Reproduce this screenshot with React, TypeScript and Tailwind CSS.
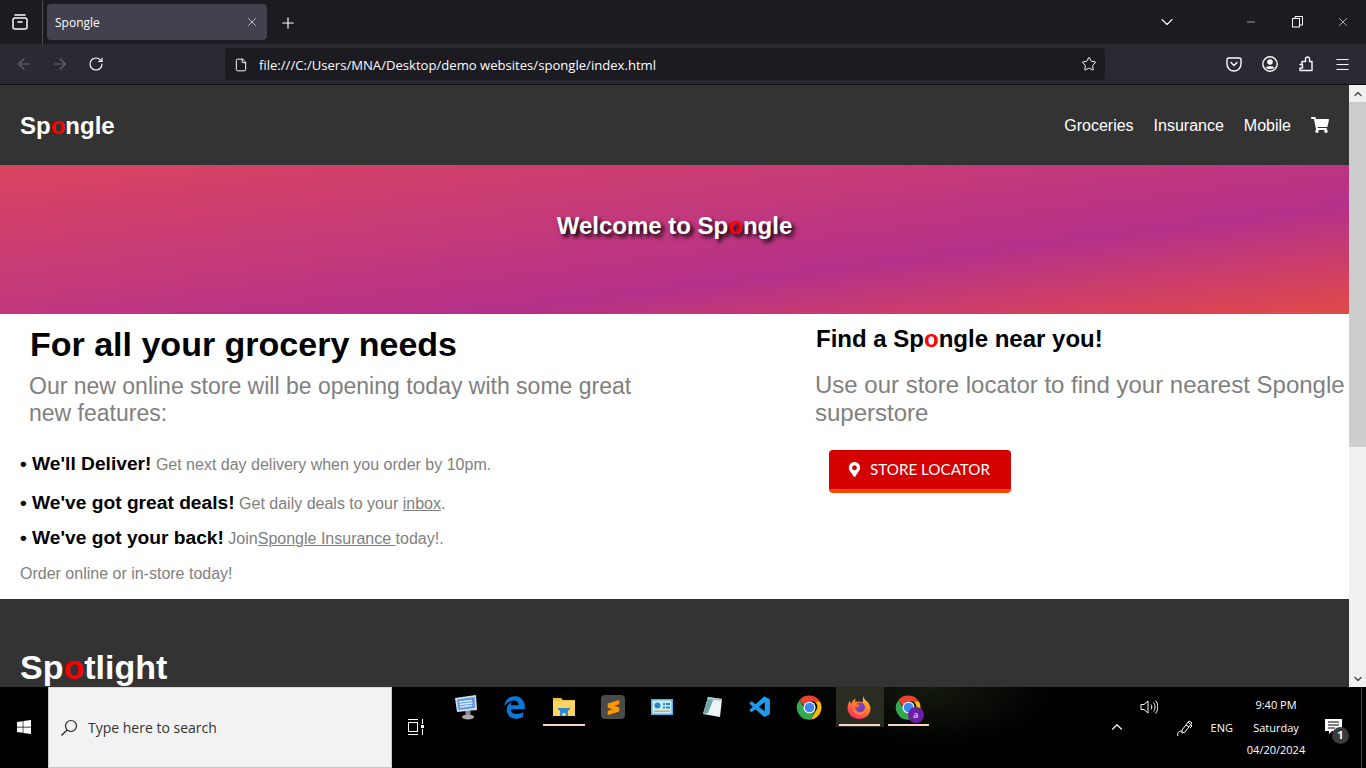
import { ArrowLeft, ArrowRight, ChevronDown, ChevronUp, File, Menu, Minus, Plus, RotateCw, Star, X } from "lucide-react";
import { FaMapMarkerAlt, FaShoppingCart, FaWindows } from "react-icons/fa";
import { FaEdgeLegacy } from "react-icons/fa";
import { VscVscode } from "react-icons/vsc";
import { SiSublimetext } from "react-icons/si";

const arial = "font-['Liberation_Sans',Arial,sans-serif]";
const ui = "font-['Open_Sans','Noto_Sans',sans-serif]";

function Logo({ text, o = "text-[#ff0000]" }: { text: [string, string]; o?: string }) {
  return (
    <>
      {text[0]}
      <span className={o}>o</span>
      {text[1]}
    </>
  );
}

function Chrome({ size = 29 }: { size?: number }) {
  return (
    <svg width={size} height={size} viewBox="0 0 48 48">
      <path d="M24 4a20 20 0 0 1 17.3 10H24a10 10 0 0 0-9.5 7L7.6 11.4A20 20 0 0 1 24 4z" fill="#ea4335" />
      <path d="M41.3 14A20 20 0 0 1 26 43.9l8.7-14.9A10 10 0 0 0 32 14z" fill="#fbbc04" />
      <path d="M26 43.9A20 20 0 0 1 7.6 11.4l8.7 15A10 10 0 0 0 25 34l8.6-4.9z" fill="#34a853" />
      <circle cx="24" cy="24" r="10" fill="#fff" />
      <circle cx="24" cy="24" r="8" fill="#4285f4" />
    </svg>
  );
}

function Firefox() {
  return (
    <svg width="24" height="24" viewBox="0 0 48 48">
      <defs>
        <linearGradient id="ffa" x1="0.8" y1="0" x2="0.2" y2="1">
          <stop offset="0" stopColor="#ffd83a" />
          <stop offset="0.45" stopColor="#ff7a2a" />
          <stop offset="1" stopColor="#f5286a" />
        </linearGradient>
      </defs>
      <path d="M32 1c1 6 4 8 8 12 5 5 7 10 7 14 0 12-10 21-23 21S1 38 1 25c0-5 2-10 5-14 0 3 1 5 3 6 1-5 5-9 9-10-2 3-2 6-1 7 5-1 11 0 14 3 1-5 1-11 1-16z" fill="url(#ffa)" />
      <circle cx="25" cy="26" r="13" fill="#ff8a30" />
      <circle cx="26" cy="25" r="10" fill="#7b3fc4" />
      <path d="M15 20c4-4 9-2 10 1s-3 4-7 4 0 8 7 9c-7 2-14-6-10-14z" fill="#ff6a2a" />
    </svg>
  );
}

function StationIcon() {
  return (
    <svg width="24" height="26" viewBox="0 0 24 26">
      <path d="M1 4 L22 1 L23 16 L3 18z" fill="#d6dde6" />
      <path d="M3 5.5 L20.5 3 L21 14 L4.5 16z" fill="#5c9ae6" />
      <path d="M5 8l13-1.5M5.5 10.5l13-1.5M6 13l12-1.5" stroke="#dbe9fb" strokeWidth="1.4" />
      <ellipse cx="14" cy="23" rx="6" ry="2.6" fill="#a9acaf" />
      <rect x="11.5" y="17" width="5" height="4" fill="#8b8f94" />
    </svg>
  );
}

function FolderIcon() {
  return (
    <svg width="22" height="20" viewBox="0 0 22 20">
      <path d="M0 1h8l2 2h12v3H0z" fill="#f2c23e" />
      <rect y="4" width="22" height="15" fill="#fcd462" />
      <path d="M7 19v-6h8v6h-2.500v-3h-3v3z" fill="#2a8bd8" />
      <rect x="5" y="11" width="12" height="2" fill="#2a8bd8" />
    </svg>
  );
}

function PanelIcon() {
  return (
    <svg width="22" height="18" viewBox="0 0 22 18">
      <rect width="22" height="16" y="1" fill="#4fb2ea" />
      <rect x="1.500" y="2.500" width="19" height="13" fill="#c9ebfa" />
      <circle cx="6.500" cy="7.500" r="3" fill="#2a86cf" />
      <path d="M12 5h2v2h-2zM15 5h4v2h-4zM12 8.500h2v2h-2zM15 8.500h4v2h-4z" fill="#2a86cf" />
      <rect x="3" y="12.500" width="16" height="1.500" fill="#e6a93a" />
    </svg>
  );
}

function NotepadIcon() {
  return (
    <svg width="24" height="24" viewBox="0 0 24 24">
      <path d="M8 2 L22 4 L20 22 L3 19z" fill="#eef3f5" />
      <path d="M8 2 L14 3 L8 18 L3 19z" fill="#6fa6ad" />
      <path d="M8 2 L22 4 L21.700 6 L7.500 4z" fill="#a8c7cc" />
    </svg>
  );
}

function TaskIcon({ children, active, underline }: { children: React.ReactNode; active?: boolean; underline?: boolean }) {
  return (
    <div className="relative flex h-10 w-[49.2px] shrink-0 items-center justify-center">
      {active && <div className="absolute inset-y-0 left-px right-0 bg-[#2a2c22]" />}
      <div className="relative flex">{children}</div>
      {underline && <div className="absolute bottom-px left-1 right-1 h-0.5 bg-[#f9d6c0]" />}
    </div>
  );
}

export default function App() {
  return (
    <div className={`flex h-screen w-full flex-col overflow-hidden bg-black ${arial}`}>
      {/* title bar */}
      <div className="flex h-11 shrink-0 bg-[#1c1b22] text-[#fbfbfe]">
        <div className="flex w-[43px] items-center justify-center border-r border-[#4a4a52]">
          <svg width="18" height="18" viewBox="0 0 18 18" fill="none" stroke="currentColor" strokeWidth="1.500" className="-ml-0.5">
            <rect x="2" y="5" width="14" height="11" rx="2" />
            <path d="M4 2h10M7 9h4" strokeLinecap="round" />
          </svg>
        </div>
        <div className="ml-1 mt-1 flex h-9 w-[220px] items-center justify-between rounded bg-[#42414d] pl-2 pr-2">
          <span className={`${ui} pt-0.5 text-xs`}>Spongle</span>
          <X size={14} strokeWidth={1.100} />
        </div>
        <div className="ml-3 flex items-center pt-0.5">
          <Plus size={18} strokeWidth={1.500} />
        </div>
        <div className="flex-1" />
        <div className="flex items-center">
          <ChevronDown size={20} strokeWidth={1.300} className="mr-[68px]" />
          <Minus size={12} strokeWidth={1.200} className="mr-[35px]" />
          <svg width="11" height="12" viewBox="0 0 11 12" fill="none" stroke="currentColor" className="mr-[33px]">
            <rect x="0.500" y="2.500" width="7" height="8.500" />
            <path d="M3 2V.5h7.500V9H8" />
          </svg>
          <X size={14} strokeWidth={1.100} className="mr-4" />
        </div>
      </div>
      {/* toolbar */}
      <div className="flex h-10 shrink-0 items-center bg-[#2b2a33] text-[#fbfbfe]">
        <ArrowLeft size={18} strokeWidth={1.500} className="ml-[15px] text-[#66656c]" />
        <ArrowRight size={18} strokeWidth={1.500} className="ml-[18px] text-[#66656c]" />
        <RotateCw size={16} strokeWidth={1.700} className="ml-[19px]" />
        <div className="ml-[121px] flex h-8 w-[880px] items-center rounded bg-[#1c1b22] pl-[9px] pr-2">
          <File size={14} strokeWidth={1.700} className="mt-px" />
          <span className={`${ui} ml-[11px] pt-[3px] text-[13.100px]`}>file:///C:/Users/MNA/Desktop/demo websites/spongle/index.html</span>
          <div className="flex-1" />
          <Star size={16} strokeWidth={1.500} />
        </div>
        <div className="flex-1" />
        <div className="flex items-center gap-5 pr-[15px]">
          <svg width="16" height="16" viewBox="0 0 16 16" fill="none" stroke="currentColor" strokeWidth="1.400">
            <path d="M2.500 2h11A1.500 1.500 0 0 1 15 3.500V8A7 7 0 0 1 1 8V3.500A1.500 1.500 0 0 1 2.500 2z" />
            <path d="M5 6.500 8 9.500l3-3" strokeLinecap="round" />
          </svg>
          <svg width="16" height="16" viewBox="0 0 16 16">
            <circle cx="8" cy="8" r="7.200" fill="none" stroke="currentColor" strokeWidth="1.400" />
            <circle cx="8" cy="6" r="2.800" fill="currentColor" />
            <path d="M3.500 11.500C5 9.800 11 9.800 12.500 11.500 11 13.500 5 13.500 3.500 11.500z" fill="currentColor" />
          </svg>
          <svg width="16" height="16" viewBox="0 0 16 16" fill="none" stroke="currentColor" strokeWidth="1.400" strokeLinejoin="round">
            <path d="M2 8.500h2V5.500h3.500V3a2 2 0 0 1 4 0v2.500h2.500v9H2v-2.500h2.500V8.500z" />
          </svg>
          <Menu size={17} strokeWidth={1.400} />
        </div>
      </div>
      <div className="h-px shrink-0 bg-[#0b0b0d]" />

      {/* page */}
      <div className="flex h-[602px] shrink-0 overflow-hidden">
        <div className="w-[1349px] shrink-0 overflow-hidden bg-white">
          <header className="flex h-20 items-center bg-[#333333] pl-5 pr-5 pt-0.5 text-white">
            <div className="text-2xl font-bold">
              <Logo text={["Sp", "ngle"]} />
            </div>
            <div className="flex-1" />
            <nav className="flex items-center gap-5 text-base">
              <span>Groceries</span>
              <span>Insurance</span>
              <span>Mobile</span>
              <FaShoppingCart size={18} className="-mt-0.5" />
            </nav>
          </header>
          <section className="flex h-[149px] items-center justify-center bg-[linear-gradient(173deg,#da4560_0%,#b5318a_66%,#e24a48_100%)]">
            <h2 className="-mt-[27px] text-2xl font-bold text-white [text-shadow:3px_3px_4px_#000]">
              Welcome to <Logo text={["Sp", "ngle"]} />
            </h2>
          </section>
          <section className="flex h-[285px] bg-white">
            <div className="w-[815px] shrink-0">
              <h1 className="ml-[30px] mt-3 text-[34px] leading-[36px] font-bold text-black">For all your grocery needs</h1>
              <p className="ml-[29px] mt-[11px] w-[620px] text-[23px] leading-[27px] text-[#808080]">
                Our new online store will be opening today with some great new features:
              </p>
              <div className="ml-5 mt-[23px] text-base text-[#808080]">
                <p className="h-[39px]">
                  <b className="text-[19.200px] text-black">• We'll Deliver!</b> Get next day delivery when you order by 10pm.
                </p>
                <p className="h-[35px]">
                  <b className="text-[19.200px] text-black">• We've got great deals!</b> Get daily deals to your <u>inbox</u>.
                </p>
                <p className="h-[38px]">
                  <b className="text-[19.200px] text-black">• We've got your back!</b> Join<u>Spongle Insurance </u>today!.
                </p>
                <p>Order online or in-store today!</p>
              </div>
            </div>
            <div className="min-w-0 flex-1">
              <h3 className="ml-px mt-[11px] text-2xl leading-[27px] font-bold text-black">
                Find a <Logo text={["Sp", "ngle"]} /> near you!
              </h3>
              <p className="mt-[19px] text-2xl leading-[28px] text-[#808080]">
                Use our store locator to find your nearest Spongle superstore
              </p>
              <button className="ml-3.5 mt-[23px] flex h-[43px] w-[182px] items-center rounded border-b-[4px] border-[#ff4500] bg-[#d40000] pl-[18px] text-white">
                <FaMapMarkerAlt size={15} />
                <span className="ml-2 font-['Lato',sans-serif] text-[15.200px]">STORE LOCATOR</span>
              </button>
            </div>
          </section>
          <section className="h-[88px] overflow-hidden bg-[#333333] pl-5 pt-[48px] text-white">
            <h2 className="text-[34px] leading-[40px] font-bold">
              <Logo text={["Sp", "tlight"]} />
            </h2>
          </section>
        </div>
        <div className="flex w-[17px] shrink-0 flex-col bg-[#f0f0f0]">
          <div className="flex h-[17px] items-center justify-center text-[#505050]">
            <ChevronUp size={12} strokeWidth={3} />
          </div>
          <div className="h-[345px] bg-[#cdcdcd]" />
          <div className="flex-1" />
          <div className="flex h-[17px] items-center justify-center text-[#505050]">
            <ChevronDown size={12} strokeWidth={3} />
          </div>
        </div>
      </div>

      {/* taskbar */}
      <div className={`flex h-[81px] shrink-0 bg-[radial-gradient(ellipse_130px_60px_at_930px_0px,#141a0e,#000)] text-white ${ui}`}>
        <div className="flex h-full w-12 items-center justify-center">
          <FaWindows size={16} className="-mt-0.5" />
        </div>
        <div className="flex h-full w-[344px] items-center border border-[#c8c8c8] border-t-[#d8d8d8] bg-[#f2f2f2] pl-[11px] text-[#333]">
          <svg width="18" height="18" viewBox="0 0 18 18" fill="none" stroke="#222" strokeWidth="1.200">
            <circle cx="11" cy="7" r="5.500" />
            <path d="M7 11 1.500 16.500" />
          </svg>
          <span className="ml-[10px] text-sm">Type here to search</span>
        </div>
        <div className="flex h-full w-[49px] items-center justify-center pr-0.5">
          <svg width="17" height="16" viewBox="0 0 17 16" fill="none" stroke="#fff" className="-mt-0.5">
            <path d="M1 .5h10M1 15.500h10M15.500 0v5M15.500 10v6" />
            <rect x="1.500" y="3.500" width="9" height="9" />
            <rect x="14" y="6" width="3" height="3" fill="#fff" stroke="none" />
          </svg>
        </div>
        <div className="flex h-10 items-start">
          <TaskIcon><StationIcon /></TaskIcon>
          <TaskIcon><FaEdgeLegacy size={23} className="text-[#0a78d6]" /></TaskIcon>
          <TaskIcon underline><FolderIcon /></TaskIcon>
          <TaskIcon>
            <div className="flex h-6 w-6 items-center justify-center rounded-sm bg-[#4a4a4a]">
              <SiSublimetext size={15} className="text-[#ff9800]" />
            </div>
          </TaskIcon>
          <TaskIcon><PanelIcon /></TaskIcon>
          <TaskIcon><NotepadIcon /></TaskIcon>
          <TaskIcon><VscVscode size={25} className="text-[#1f9cf0]" /></TaskIcon>
          <TaskIcon><Chrome /></TaskIcon>
          <TaskIcon active underline><Firefox /></TaskIcon>
          <TaskIcon underline>
            <Chrome />
            <div className="absolute bottom-[-1px] right-[-1px] flex h-4 w-4 items-center justify-center rounded-full bg-[#6a1fa8] text-[9px] text-white">a</div>
          </TaskIcon>
        </div>
        <div className="flex-1" />
        <div className="flex h-full text-[11px]">
          <div className="mr-[14px] mt-[31px]">
            <ChevronUp size={18} strokeWidth={1.500} />
          </div>
          <svg width="18" height="16" viewBox="0 0 18 16" fill="none" stroke="#fff" className="mr-[18px] mt-3">
            <path d="M1 5.500h3L8 2v12L4 10.500H1zM11 5.500c1 1.500 1 3.500 0 5M13.500 3.500c2 2.500 2 6.500 0 9M15.500 1.500c3 3.500 3 9.500 0 13" />
          </svg>
          <svg width="18" height="18" viewBox="0 0 18 18" fill="none" stroke="#fff" className="mr-[17px] mt-8">
            <path d="M6 11 13 2l3 2-7 9-3 1zM10 6l3 2M6 12c-4 0-5 2-4 5M12 3l4 4-2 2" />
          </svg>
          <span className="mr-[13px] mt-[33px]">ENG</span>
          <div className="flex w-[60px] flex-col items-center pt-[7px] leading-[22.500px]">
            <span>9:40 PM</span>
            <span>Saturday</span>
            <span>04/20/2024</span>
          </div>
          <div className="relative ml-[19px] mt-8 h-[17px] w-[17px]">
            <svg width="17" height="15" viewBox="0 0 17 15">
              <path d="M0 0h17v12H7l-3 3v-3H0z" fill="#fff" />
              <path d="M3 3h11M3 6h11M3 9h7" stroke="#000" />
            </svg>
            <div className="absolute left-[7px] top-[8px] flex h-[17px] w-[17px] items-center justify-center rounded-full bg-[#3a3a3a] text-[11px] font-bold">1</div>
          </div>
          <div className="ml-[19px] mr-1 h-full w-px bg-[#444]" />
        </div>
      </div>
    </div>
  );
}
